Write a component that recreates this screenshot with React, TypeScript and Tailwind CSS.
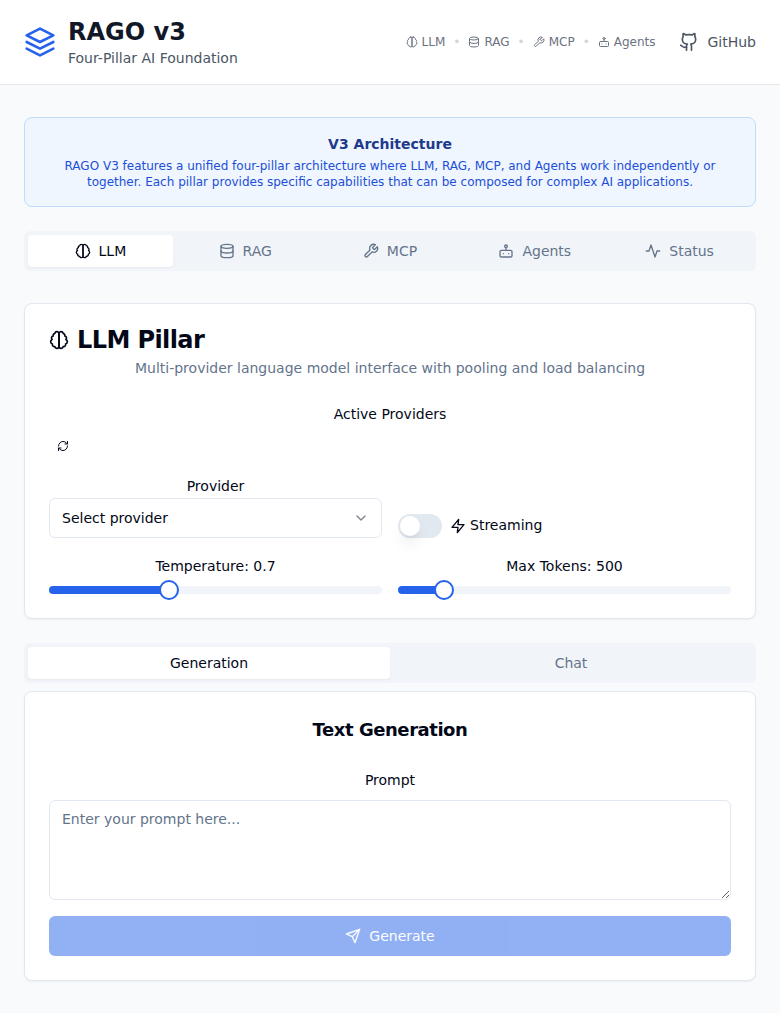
import { useState, type ReactNode } from "react";
import * as Slider from "@radix-ui/react-slider";

type IconProps = { className?: string };

function Icon({ className = "size-4", children }: IconProps & { children: ReactNode }) {
  return (
    <svg
      viewBox="0 0 24 24"
      fill="none"
      stroke="currentColor"
      strokeWidth="2"
      strokeLinecap="round"
      strokeLinejoin="round"
      className={`shrink-0 ${className}`}
    >
      {children}
    </svg>
  );
}

const Layers = (p: IconProps) => (
  <Icon {...p}>
    <polygon points="12 2 2 7 12 12 22 7 12 2" />
    <polyline points="2 17 12 22 22 17" />
    <polyline points="2 12 12 17 22 12" />
  </Icon>
);

const Brain = (p: IconProps) => (
  <Icon {...p}>
    <path d="M9.5 2A2.5 2.5 0 0 1 12 4.5v15a2.5 2.5 0 0 1-4.96.44 2.5 2.5 0 0 1-2.96-3.08 3 3 0 0 1-.34-5.58 2.5 2.5 0 0 1 1.32-4.24 2.5 2.5 0 0 1 1.98-3A2.5 2.5 0 0 1 9.5 2Z" />
    <path d="M14.5 2A2.5 2.5 0 0 0 12 4.5v15a2.5 2.5 0 0 0 4.96.44 2.5 2.5 0 0 0 2.96-3.08 3 3 0 0 0 .34-5.58 2.5 2.5 0 0 0-1.32-4.24 2.5 2.5 0 0 0-1.98-3A2.5 2.5 0 0 0 14.5 2Z" />
  </Icon>
);

const Database = (p: IconProps) => (
  <Icon {...p}>
    <ellipse cx="12" cy="5" rx="9" ry="3" />
    <path d="M3 5V19A9 3 0 0 0 21 19V5" />
    <path d="M3 12A9 3 0 0 0 21 12" />
  </Icon>
);

const Wrench = (p: IconProps) => (
  <Icon {...p}>
    <path d="M14.7 6.3a1 1 0 0 0 0 1.4l1.6 1.6a1 1 0 0 0 1.4 0l3.77-3.77a6 6 0 0 1-7.94 7.94l-6.91 6.91a2.12 2.12 0 0 1-3-3l6.91-6.91a6 6 0 0 1 7.94-7.94l-3.76 3.76z" />
  </Icon>
);

const Bot = (p: IconProps) => (
  <Icon {...p}>
    <rect width="18" height="10" x="3" y="11" rx="2" />
    <circle cx="12" cy="5" r="2" />
    <path d="M12 7v4" />
    <line x1="8" x2="8" y1="16" y2="16" />
    <line x1="16" x2="16" y1="16" y2="16" />
  </Icon>
);

const Activity = (p: IconProps) => (
  <Icon {...p}>
    <path d="M22 12h-4l-3 9L9 3l-3 9H2" />
  </Icon>
);

const Github = (p: IconProps) => (
  <Icon {...p}>
    <path d="M15 22v-4a4.8 4.8 0 0 0-1-3.5c3 0 6-2 6-5.5.08-1.25-.27-2.48-1-3.5.28-1.15.28-2.35 0-3.5 0 0-1 0-3 1.5-2.64-.5-5.36-.5-8 0C6 2 5 2 5 2c-.3 1.15-.3 2.35 0 3.5A5.403 5.403 0 0 0 4 9c0 3.5 3 5.5 6 5.5-.39.49-.68 1.05-.85 1.65-.17.6-.22 1.23-.15 1.85v4" />
    <path d="M9 18c-4.51 2-5-2-7-2" />
  </Icon>
);

const RefreshCw = (p: IconProps) => (
  <Icon {...p}>
    <path d="M3 12a9 9 0 0 1 9-9 9.75 9.75 0 0 1 6.74 2.74L21 8" />
    <path d="M21 3v5h-5" />
    <path d="M21 12a9 9 0 0 1-9 9 9.75 9.75 0 0 1-6.74-2.74L3 16" />
    <path d="M8 16H3v5" />
  </Icon>
);

const ChevronDown = (p: IconProps) => (
  <Icon {...p}>
    <path d="m6 9 6 6 6-6" />
  </Icon>
);

const Zap = (p: IconProps) => (
  <Icon {...p}>
    <polygon points="13 2 3 14 12 14 11 22 21 10 12 10 13 2" />
  </Icon>
);

const Send = (p: IconProps) => (
  <Icon {...p}>
    <path d="m22 2-7 20-4-9-9-4Z" />
    <path d="M22 2 11 13" />
  </Icon>
);

const pillars = [
  { name: "LLM", Glyph: Brain },
  { name: "RAG", Glyph: Database },
  { name: "MCP", Glyph: Wrench },
  { name: "Agents", Glyph: Bot },
];

const tabs = [...pillars, { name: "Status", Glyph: Activity }];

function Tab({ active, onClick, children }: { active: boolean; onClick: () => void; children: ReactNode }) {
  return (
    <button
      onClick={onClick}
      className={`flex h-8 items-center justify-center gap-2 rounded-sm px-3 text-sm font-medium ${
        active ? "bg-white text-[#020817] shadow-[0_1px_2px_0_rgba(0,0,0,0.05)]" : "text-[#64748b]"
      }`}
    >
      {children}
    </button>
  );
}

function Card({ className = "", children }: { className?: string; children: ReactNode }) {
  return (
    <section
      className={`rounded-lg border border-[#e2e8f0] bg-white p-6 shadow-[0_1px_2px_0_rgba(0,0,0,0.05)] ${className}`}
    >
      {children}
    </section>
  );
}

function FieldLabel({ children }: { children: ReactNode }) {
  return <div className="text-center text-sm/6 font-medium">{children}</div>;
}

function RangeField({
  label,
  value,
  onChange,
  min,
  max,
  step,
}: {
  label: string;
  value: number;
  onChange: (v: number) => void;
  min: number;
  max: number;
  step: number;
}) {
  return (
    <div>
      <FieldLabel>
        {label}: {value}
      </FieldLabel>
      <Slider.Root
        className="relative mt-2 flex w-full touch-none items-center select-none"
        value={[value]}
        onValueChange={([v]) => onChange(v)}
        min={min}
        max={max}
        step={step}
      >
        <Slider.Track className="relative h-2 w-full grow overflow-hidden rounded-full bg-[#f1f5f9]">
          <Slider.Range className="absolute h-full bg-[#2563eb]" />
        </Slider.Track>
        <Slider.Thumb aria-label={label} className="block size-5 rounded-full border-2 border-[#2563eb] bg-white" />
      </Slider.Root>
    </div>
  );
}

export default function App() {
  const [tab, setTab] = useState("LLM");
  const [mode, setMode] = useState("Generation");
  const [temperature, setTemperature] = useState(0.7);
  const [maxTokens, setMaxTokens] = useState(500);
  const [streaming, setStreaming] = useState(false);

  return (
    <div className="min-h-screen bg-[#f9fafb] font-['DejaVu_Sans',sans-serif] text-[#020817]">
      <header className="flex items-center justify-between border-b border-[#e5e7eb] bg-white px-6 py-4">
        <div className="flex items-center gap-3">
          <Layers className="size-8 text-[#2563eb]" />
          <div>
            <h1 className="text-2xl font-bold text-[#111827]">RAGO v3</h1>
            <p className="text-sm text-[#4b5563]">Four-Pillar AI Foundation</p>
          </div>
        </div>
        <div className="flex items-center gap-6">
          <div className="flex items-center gap-2 text-xs text-[#6b7280]">
            {pillars.map(({ name, Glyph }, i) => (
              <div key={name} className="flex items-center gap-2">
                {i > 0 && <span className="text-[#d1d5db]">•</span>}
                <span className="flex items-center gap-1">
                  <Glyph className="size-3" />
                  {name}
                </span>
              </div>
            ))}
          </div>
          <a className="flex items-center gap-2 text-sm text-[#4b5563]">
            <Github className="size-5" />
            GitHub
          </a>
        </div>
      </header>

      <main className="px-6 py-8">
        <div className="mb-6 rounded-lg border border-[#bfdbfe] bg-[#eff6ff] p-4 text-center">
          <h2 className="mb-1 text-sm font-semibold text-[#1e3a8a]">V3 Architecture</h2>
          <p className="text-xs text-[#1d4ed8]">
            RAGO V3 features a unified four-pillar architecture where LLM, RAG, MCP, and Agents work independently or
            together. Each pillar provides specific capabilities that can be composed for complex AI applications.
          </p>
        </div>

        <div className="mb-8 grid h-10 grid-cols-5 rounded-md bg-[#f1f5f9] p-1">
          {tabs.map(({ name, Glyph }) => (
            <Tab key={name} active={tab === name} onClick={() => setTab(name)}>
              <Glyph />
              {name}
            </Tab>
          ))}
        </div>

        <Card className="mb-6">
          <h3 className="mb-1.5 flex items-center gap-2 text-2xl leading-none font-semibold tracking-tight">
            <Brain className="size-5" />
            LLM Pillar
          </h3>
          <p className="mb-6 text-center text-sm text-[#64748b]">
            Multi-provider language model interface with pooling and load balancing
          </p>
          <FieldLabel>Active Providers</FieldLabel>
          <button aria-label="Refresh providers" className="mt-2 mb-4 flex h-6 items-center px-2">
            <RefreshCw className="size-3" />
          </button>
          <div className="grid grid-cols-2 gap-4">
            <div>
              <FieldLabel>Provider</FieldLabel>
              <button className="flex h-10 w-full items-center justify-between rounded-md border border-[#e2e8f0] bg-white px-3 text-sm">
                Select provider
                <ChevronDown className="size-4 opacity-50" />
              </button>
            </div>
            <div className="flex items-end gap-2">
              <button
                role="switch"
                aria-checked={streaming}
                aria-label="Streaming"
                onClick={() => setStreaming(!streaming)}
                className={`flex h-6 w-11 items-center rounded-full p-0.5 ${
                  streaming ? "justify-end bg-[#2563eb]" : "bg-[#e2e8f0]"
                }`}
              >
                <span className="size-5 rounded-full bg-white shadow-[0_10px_15px_-3px_rgba(0,0,0,0.1),0_4px_6px_-4px_rgba(0,0,0,0.1)]" />
              </button>
              <div className="flex h-6 items-center gap-1 text-sm font-medium">
                <Zap />
                <span className="pb-0.5">Streaming</span>
              </div>
            </div>
            <RangeField label="Temperature" value={temperature} onChange={setTemperature} min={0} max={2} step={0.1} />
            <RangeField label="Max Tokens" value={maxTokens} onChange={setMaxTokens} min={50} max={4000} step={50} />
          </div>
        </Card>

        <div className="mb-2 grid h-10 grid-cols-2 rounded-md bg-[#f1f5f9] p-1">
          {["Generation", "Chat"].map((name) => (
            <Tab key={name} active={mode === name} onClick={() => setMode(name)}>
              {name}
            </Tab>
          ))}
        </div>

        <Card>
          <h3 className="mb-6 text-center text-lg font-semibold tracking-tight">Text Generation</h3>
          <FieldLabel>Prompt</FieldLabel>
          <textarea
            placeholder="Enter your prompt here..."
            className="mt-2 block h-[100px] w-full rounded-md border border-[#e2e8f0] bg-white px-3 py-2 text-sm placeholder:text-[#64748b]"
          />
          <button
            disabled
            className="mt-4 flex h-10 w-full items-center justify-center gap-2 rounded-md bg-[#2563eb] text-sm font-medium text-[#f8fafc] opacity-50"
          >
            <Send />
            Generate
          </button>
        </Card>
      </main>
    </div>
  );
}
